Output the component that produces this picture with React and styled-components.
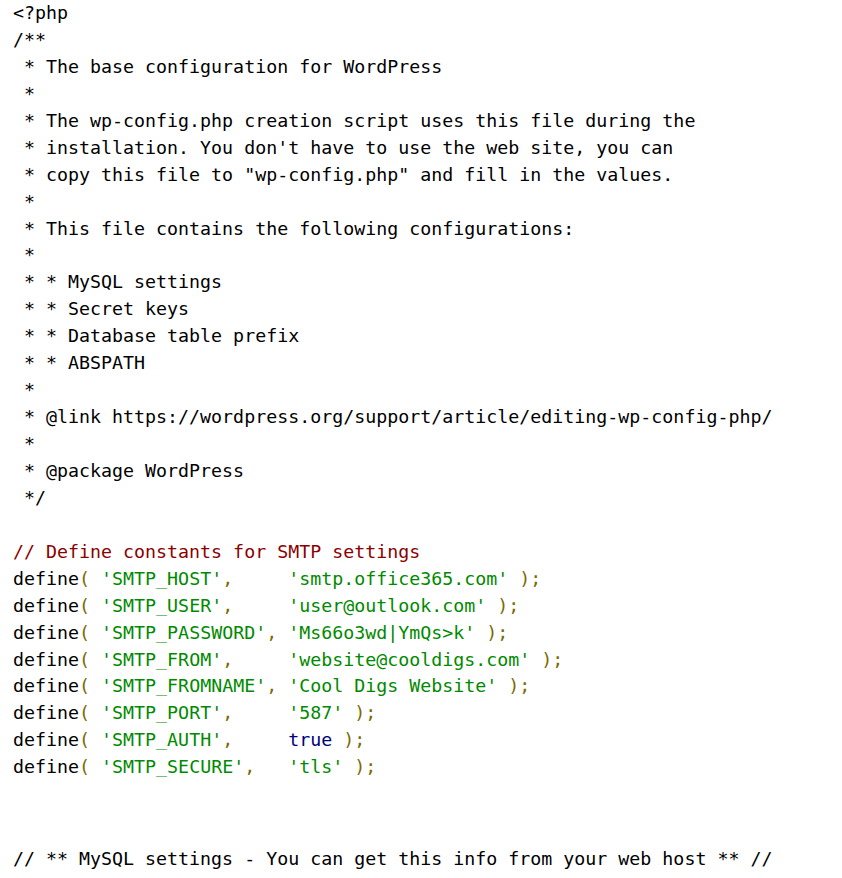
import React from "react";
import styled, { createGlobalStyle } from "styled-components";

const Global = createGlobalStyle`
  html, body { margin: 0; padding: 0; background: #ffffff; }
`;

const Page = styled.div`
  padding: 0 0 0 13px;
  font-family: "DejaVu Sans Mono", "Liberation Mono", monospace;
  font-size: 18.3px;
  line-height: 26.93px;
  color: #000000;
`;

const Code = styled.pre`
  margin: ${(p) => (p.$gap ? `${p.$gap}px` : "0")} 0 0 0;
  font: inherit;
  white-space: pre;
`;

const Comment = styled.span`
  color: #8b0000;
`;
const Str = styled.span`
  color: #008a00;
`;
const Punc = styled.span`
  color: #7a6a00;
`;
const Kw = styled.span`
  color: #000080;
`;

const docBlock = `<?php
/**
 * The base configuration for WordPress
 *
 * The wp-config.php creation script uses this file during the
 * installation. You don't have to use the web site, you can
 * copy this file to "wp-config.php" and fill in the values.
 *
 * This file contains the following configurations:
 *
 * * MySQL settings
 * * Secret keys
 * * Database table prefix
 * * ABSPATH
 *
 * @link https://wordpress.org/support/article/editing-wp-config-php/
 *
 * @package WordPress
 */
`;

const defines = [
  ["'SMTP_HOST',", "     ", "'smtp.office365.com'"],
  ["'SMTP_USER',", "     ", "'user@outlook.com'"],
  ["'SMTP_PASSWORD',", " ", "'Ms66o3wd|YmQs>k'"],
  ["'SMTP_FROM',", "     ", "'website@cooldigs.com'"],
  ["'SMTP_FROMNAME',", " ", "'Cool Digs Website'"],
  ["'SMTP_PORT',", "     ", "'587'"],
  ["'SMTP_AUTH',", "     ", "true", true],
  ["'SMTP_SECURE',", "   ", "'tls'"],
];

export default function App() {
  return (
    <Page>
      <Global />
      <Code>
        {docBlock}
        {"\n"}
        <Comment>// Define constants for SMTP settings</Comment>
        {"\n"}
        {defines.map(([name, pad, val, kw], i) => (
          <React.Fragment key={i}>
            define<Punc>(</Punc> <Str>{name.slice(0, -1)}</Str>
            <Punc>,</Punc>
            {pad}
            {kw ? <Kw>{val}</Kw> : <Str>{val}</Str>} <Punc>);</Punc>
            {i < defines.length - 1 ? "\n" : ""}
          </React.Fragment>
        ))}
      </Code>
      <Code $gap={65}>// ** MySQL settings - You can get this info from your web host ** //</Code>
    </Page>
  );
}
